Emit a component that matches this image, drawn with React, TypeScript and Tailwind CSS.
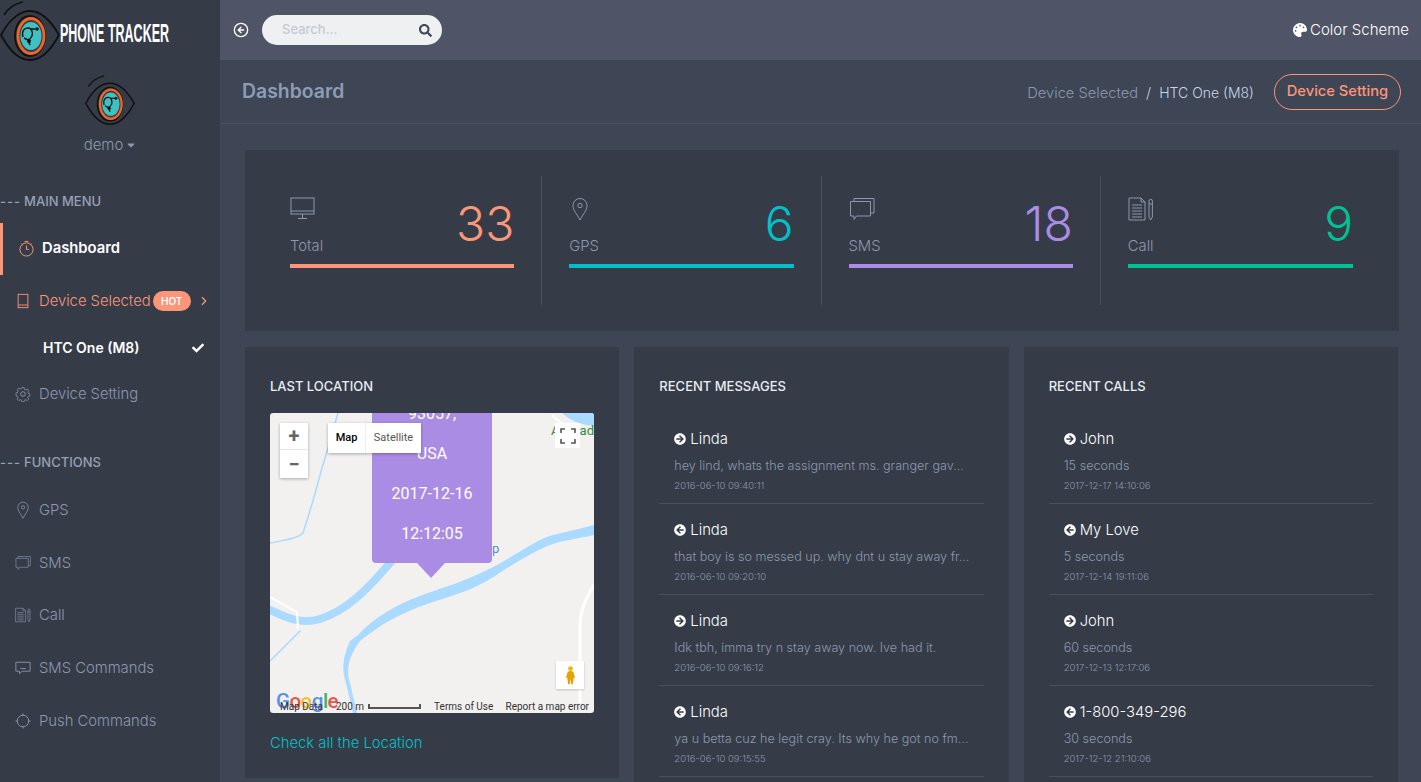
import React from "react";
import { FaArrowCircleRight, FaArrowCircleLeft, FaCheck, FaSearch, FaCaretDown, FaPalette } from "react-icons/fa";
import { CircleArrowLeft, ChevronRight } from "lucide-react";

type IP = { className?: string };
const line = { fill: "none", stroke: "currentColor", strokeWidth: 1 } as const;

const Eye = ({ className }: IP) => (
  <svg viewBox="0 0 60 60" className={className}>
    <path d="M1 34 C10 17 21 10 30 10 C41 10 51 20 59 34 C51 49 41 59 30 59 C19 59 9 49 1 34Z" fill="none" stroke="#111" strokeWidth="1.800" />
    <path d="M4 14 C8 7 14 3 23 1" fill="none" stroke="#111" strokeWidth="1.600" />
    <ellipse cx="30" cy="35" rx="15" ry="20" fill="none" stroke="#111" strokeWidth="1.800" />
    <ellipse cx="31" cy="35" rx="13" ry="17.500" fill="none" stroke="#f26522" strokeWidth="2.800" />
    <ellipse cx="31" cy="35" rx="10.500" ry="14" fill="#3fc1c4" />
    <path d="M23 36 C21 29 26 25 31 28 L35 28 M31 28 C34 33 32 37 28 39 M28 39 L30 44 M28 39 L24 37" fill="none" stroke="#111" strokeWidth="1.500" />
    <circle cx="37" cy="28" r="1.800" fill="#111" />
    <circle cx="29" cy="40" r="2" fill="#111" />
  </svg>
);

const Timer = ({ className }: IP) => (
  <svg viewBox="0 0 18 18" className={className} {...line}>
    <circle cx="9" cy="10" r="7" />
    <path d="M9 6v4h2.500M7 1.500h4M3.500 4 5 5.200M14.500 4 13 5.200" />
  </svg>
);
const Tablet = ({ className }: IP) => (
  <svg viewBox="0 0 18 18" className={className} {...line}>
    <rect x="3.500" y="1.500" width="11" height="15" />
    <path d="M3.500 13.500h11" />
  </svg>
);
const Gear = ({ className }: IP) => (
  <svg viewBox="0 0 18 18" className={className} {...line}>
    <circle cx="9" cy="9" r="2.600" />
    <path d="M7.600 1h2.800l.4 2.200 1.500.7 2-1.200 1.900 2-1.200 1.900.6 1.500 2 .5v2.800l-2 .5-.6 1.500 1.200 1.900-2 2-1.900-1.200-1.500.6-.4 2H7.600l-.5-2-1.500-.6-1.900 1.200-2-2 1.200-1.900-.6-1.500-2-.5V7.600l2-.5.6-1.500-1.200-1.900 2-2 1.900 1.200 1.500-.7Z" transform="translate(.9 .9) scale(.9)" />
  </svg>
);
const Pin = ({ className }: IP) => (
  <svg viewBox="0 0 18 24" className={className} {...line}>
    <path d="M9 23 C6 17 2 13.500 2 8.500 A7 7 0 0 1 16 8.500 C16 13.500 12 17 9 23Z" />
    <circle cx="9" cy="8.500" r="2.200" />
  </svg>
);
const Chats = ({ className }: IP) => (
  <svg viewBox="0 0 26 24" className={className} {...line}>
    <path d="M5 4V1.500h20V16h-3" />
    <path d="M1.500 4.500h20V19H7.500L5 22.500V19H1.500Z" />
  </svg>
);
const Doc = ({ className }: IP) => (
  <svg viewBox="0 0 26 24" className={className} {...line}>
    <path d="M1 1h12l4 4v18H1Z M13 1v4h4 M4 8h10M4 11h10M4 14h10M4 17h10M4 20h10" />
    <path d="M21 4 a1.700 1.700 0 0 1 3.400 0V20l-1.700 3-1.700-3Z M21 7h3.400" />
  </svg>
);
const Monitor = ({ className }: IP) => (
  <svg viewBox="0 0 26 24" className={className} {...line}>
    <rect x="1" y="1" width="23" height="16" />
    <path d="M1 14h23M12.500 17v4M8 21.500h9" />
  </svg>
);
const Comment = ({ className }: IP) => (
  <svg viewBox="0 0 18 16" className={className} {...line}>
    <path d="M1 1h16v10H8l-3 3v-3H1Z M6 8h6" />
  </svg>
);
const Target = ({ className }: IP) => (
  <svg viewBox="0 0 18 18" className={className} {...line}>
    <circle cx="9" cy="9" r="6.500" />
    <path d="M9 .5v3M9 14.500v3M.5 9h3M14.500 9h3" />
  </svg>
);

const Section = ({ label, className }: { label: string; className?: string }) => (
  <div className={`flex h-5 items-center gap-[3px] text-[13px] font-medium leading-5 text-[#97a1b5] ${className ?? ""}`}>
    <span className="tracking-[1px]">---</span>
    <span>{label}</span>
  </div>
);

const NavItem = ({ icon, label, h = "h-[52.75px]" }: { icon: React.ReactNode; label: string; h?: string }) => (
  <div className={`flex items-center gap-[8px] pl-[15px] text-[14.800px] font-light text-[#8d97ad] ${h}`}>
    <span className="flex w-4 justify-center">{icon}</span>
    <span>{label}</span>
  </div>
);

const Sidebar = () => (
  <aside className="flex w-[220px] shrink-0 flex-col bg-[#353c48]">
    <div className="flex h-[62px] items-center">
      <Eye className="h-[62px] w-[60px] shrink-0" />
      <span className="mt-[4px] block w-[109px] whitespace-nowrap text-[25px] font-bold leading-none text-white [font-family:'Liberation_Sans',sans-serif]">
        <span className="inline-block origin-left scale-x-[0.5]">PHONE TRACKER</span>
      </span>
    </div>
    <div className="mt-[12px] flex justify-center"><Eye className="h-[52px] w-[50px]" /></div>
    <div className="mt-[8px] flex items-center justify-center gap-[3px] text-[15px] font-light text-[#8d97ad]">
      demo <FaCaretDown className="h-3 w-[10px]" />
    </div>
    <Section label="MAIN MENU" className="mt-[34px]" />
    <div className="mt-[12px] flex h-[52px] items-center gap-[7px] border-l-[3px] border-[#fb9678] pl-[15px] text-[14.800px] font-semibold text-white">
      <Timer className="h-[17px] w-[17px] text-[#fb9678]" />
      <span>Dashboard</span>
    </div>
    <div className="flex h-[53px] items-center pl-[15px] text-[14.800px] font-light text-[#fb9678]">
      <Tablet className="mr-[8px] h-4 w-4" />
      <span>Device Selected</span>
      <span className="ml-[2px] flex h-5 w-[38px] items-center justify-center rounded-full bg-[#fb9678] text-[10px] font-semibold text-white">HOT</span>
      <ChevronRight className="ml-[6px] h-[14px] w-[14px]" />
    </div>
    <div className="flex h-[40px] items-center justify-between pl-[43px] pr-[15px] text-[14px] font-semibold text-white">
      <span>HTC One (M8)</span>
      <FaCheck className="h-3 w-[14px]" />
    </div>
    <NavItem h="h-[53px]" icon={<Gear className="h-4 w-4" />} label="Device Setting" />
    <Section label="FUNCTIONS" className="mt-[31px]" />
    <div className="mt-[12px] flex flex-col">
      <NavItem icon={<Pin className="h-[18px] w-4" />} label="GPS" />
      <NavItem icon={<Chats className="h-4 w-[17px]" />} label="SMS" />
      <NavItem icon={<Doc className="h-[18px] w-[18px]" />} label="Call" />
      <NavItem icon={<Comment className="h-[15px] w-[17px]" />} label="SMS Commands" />
      <NavItem icon={<Target className="h-4 w-4" />} label="Push Commands" />
    </div>
  </aside>
);

const stats = [
  { label: "Total", value: "33", text: "text-[#fb9678]", bar: "bg-[#fb9678]", icon: <Monitor className="h-6 w-[26px]" /> },
  { label: "GPS", value: "6", text: "text-[#01c0c8]", bar: "bg-[#01c0c8]", icon: <Pin className="ml-[2px] h-6 w-[18px]" /> },
  { label: "SMS", value: "18", text: "text-[#ab8ce4]", bar: "bg-[#ab8ce4]", icon: <Chats className="h-6 w-[26px]" /> },
  { label: "Call", value: "9", text: "text-[#00c292]", bar: "bg-[#00c292]", icon: <Doc className="h-6 w-[26px]" /> },
];

const Stats = () => (
  <section className="mb-4 grid h-[181px] grid-cols-4 bg-[#353c48] py-[26px] pl-[18px] pr-[19px]">
    {stats.map((s, i) => (
      <div key={s.label} className={`flex flex-col px-[27px] pt-[21px] ${i < 3 ? "border-r border-[#4a505d]" : ""}`}>
        <div className="flex h-[67px] items-start justify-between">
          <div className="flex flex-col text-[#8d97ad]">
            {s.icon}
            <span className="mt-[13px] text-[14.800px] font-light leading-6">{s.label}</span>
          </div>
          <span className={`-mt-[9px] text-[48px] font-light leading-[72px] ${s.text}`}>{s.value}</span>
        </div>
        <div className={`h-1 w-full ${s.bar}`} />
      </div>
    ))}
  </section>
);

const MapView = () => (
  <div className="relative h-[300px] w-[324px] overflow-hidden rounded-[3px] bg-[#f2f1ef] [font-family:Roboto,sans-serif]">
    <svg viewBox="0 0 324 300" className="block h-full w-full">
      <path d="M292 0 C300 8 312 12 324 13 V0Z" fill="#aadaff" />
      <path d="M282 2 C286 6 290 10 296 13" fill="none" stroke="#fff" strokeWidth="2" />
      <g fill="none" stroke="#aadaff" strokeLinecap="round">
        <path d="M68 0 C62 20 58 36 52 55 C44 85 38 105 33 120 C28 126 10 128 0 130" strokeWidth="1.500" />
        <path d="M0 197 C15 204 30 212 50 206 C75 198 95 180 125 144" strokeWidth="8" />
        <path d="M30 218 L0 248" strokeWidth="1.500" />
      </g>
      <path d="M324 112 C300 119 283 120 268 128 C250 138 232 150 215 158 C195 168 175 174 155 181 C125 192 105 204 88 222 L80 228 C72 246 72 258 76 270 L83 300 H87 L80 270 C76 258 78 244 90 228 C110 212 130 200 160 190 C185 182 205 176 225 163 C240 153 258 142 275 134 C290 127 308 126 324 122Z" fill="#aadaff" />
      <g fill="none" stroke="#ffffff" strokeWidth="3">
        <path d="M324 172 C316 185 311 195 310 210 L310 290" />
        <path d="M0 184 L27 199 L28 216" strokeWidth="2" />
      </g>
    </svg>
    <span className="absolute left-[281px] top-[10px] text-[13px] leading-4 text-[#2e8b3d]">A</span>
    <span className="absolute right-0 top-[10px] text-[13px] leading-4 text-[#2e8b3d]">ad</span>
    <span className="absolute left-[222px] top-[128px] text-[13px] leading-4 text-[#5b8fc4]">p</span>

    <div className="absolute left-[102px] top-[-19px] flex h-[169px] w-[120px] flex-col items-center rounded-b-[4px] bg-[#ab8ce4] text-[16px] leading-[40px] text-white">
      <span>93057,</span>
      <span>USA</span>
      <span>2017-12-16</span>
      <span>12:12:05</span>
    </div>
    <div className="absolute left-[147px] top-[150px] h-0 w-0 border-x-[14px] border-t-[15px] border-x-transparent border-t-[#ab8ce4]" />

    <div className="absolute left-[10px] top-[10px] flex h-[55px] w-[28px] flex-col items-center bg-white shadow-[0_1px_3px_rgba(0,0,0,0.3)]">
      <span className="flex h-[27px] w-full items-center justify-center border-b border-[#e6e6e6] text-[20px] font-bold text-[#666]">+</span>
      <span className="flex h-[28px] w-full items-center justify-center text-[20px] font-bold text-[#666]">−</span>
    </div>
    <div className="absolute left-[58px] top-[10px] flex h-[30px] bg-white text-[11px] shadow-[0_1px_3px_rgba(0,0,0,0.3)]">
      <span className="flex w-[37px] items-center justify-center font-medium text-black">Map</span>
      <span className="flex w-[56px] items-center justify-center border-l border-[#eee] text-[#565656]">Satellite</span>
    </div>
    <div className="absolute left-[285px] top-[10px] flex h-[25px] w-[25px] items-center justify-center bg-white">
      <svg viewBox="0 0 16 16" className="h-4 w-4" fill="none" stroke="#555" strokeWidth="1.600">
        <path d="M1 5V1h4M11 1h4v4M15 11v4h-4M5 15H1v-4" />
      </svg>
    </div>
    <div className="absolute left-[286px] top-[248px] flex h-7 w-7 items-center justify-center bg-white shadow-[0_1px_2px_rgba(0,0,0,0.2)]">
      <svg viewBox="0 0 12 20" className="h-5 w-[11px]">
        <circle cx="6" cy="3" r="2.600" fill="#f5b400" />
        <path d="M3 6.500 Q6 5 9 6.500 L11 13 H9.500 L8.500 20 H6.800 L6 14 L5.200 20 H3.500 L2.500 13 H1Z" fill="#e8a200" />
      </svg>
    </div>
    <div className="absolute bottom-0 left-[6px] text-[20.500px] font-medium leading-[24px] tracking-[-0.5px] opacity-90">
      <span className="text-[#4285f4]">G</span><span className="text-[#ea4335]">o</span><span className="text-[#fbbc05]">o</span><span className="text-[#4285f4]">g</span><span className="text-[#34a853]">l</span><span className="text-[#ea4335]">e</span>
    </div>
    <div className="absolute bottom-0 left-[10px] right-[5px] flex h-[14px] items-center text-[10px] text-[#333]">
      <span>Map Data</span>
      <span className="ml-[13px]">200 m</span>
      <span className="ml-[4px] h-[5px] w-[53px] border-x-2 border-b-2 border-[#555]" />
      <span className="ml-[13px]">Terms of Use</span>
      <span className="ml-auto">Report a map error</span>
    </div>
  </div>
);

const Card = ({ title, children, className }: { title: string; children: React.ReactNode; className?: string }) => (
  <div className={`bg-[#353c48] px-[25px] pt-[29px] ${className ?? ""}`}>
    <h3 className="mb-[16px] h-[21px] text-[13px] font-medium uppercase leading-[20px] text-[#e8ecf3]">{title}</h3>
    {children}
  </div>
);

const Row = ({ dir, name, text, date }: { dir: "in" | "out"; name: string; text: string; date: string }) => (
  <div className="flex h-[91px] flex-col border-b border-[#4a505d] pl-[15px] pt-[14px]">
    <div className="flex h-[24px] items-center gap-[4px] text-[14.800px] font-light text-white">
      {dir === "out" ? <FaArrowCircleRight className="h-3 w-3" /> : <FaArrowCircleLeft className="h-3 w-3" />}
      <span>{name}</span>
    </div>
    <div className="mt-[5px] h-[20px] truncate text-[12.600px] font-light leading-5 text-[#8d97ad]">{text}</div>
    <div className="mt-[2px] text-[9.500px] font-light leading-4 text-[#8d97ad]">{date}</div>
  </div>
);

const messages = [
  { dir: "out", name: "Linda", text: "hey lind, whats the assignment ms. granger gav...", date: "2016-06-10 09:40:11" },
  { dir: "in", name: "Linda", text: "that boy is so messed up. why dnt u stay away fr...", date: "2016-06-10 09:20:10" },
  { dir: "out", name: "Linda", text: "Idk tbh, imma try n stay away now. Ive had it.", date: "2016-06-10 09:16:12" },
  { dir: "in", name: "Linda", text: "ya u betta cuz he legit cray. Its why he got no fm...", date: "2016-06-10 09:15:55" },
] as const;
const calls = [
  { dir: "out", name: "John", text: "15 seconds", date: "2017-12-17 14:10:06" },
  { dir: "in", name: "My Love", text: "5 seconds", date: "2017-12-14 19:11:06" },
  { dir: "out", name: "John", text: "60 seconds", date: "2017-12-13 12:17:06" },
  { dir: "in", name: "1-800-349-296", text: "30 seconds", date: "2017-12-12 21:10:06" },
] as const;

export default function App() {
  return (
    <div className="flex h-[782px] w-[1421px] overflow-hidden bg-[#3e4555] [font-family:Inter,sans-serif]">
      <Sidebar />
      <main className="flex min-w-0 flex-1 flex-col">
        <header className="flex h-[60px] shrink-0 items-center bg-[#4f5467] pl-[13px] pr-[12px]">
          <CircleArrowLeft className="h-4 w-4 text-white" />
          <div className="ml-[13px] flex h-[30px] w-[180px] items-center justify-between rounded-full bg-[#eef0f1] pl-5 pr-[10px] text-[13px] font-medium text-[#c5cad3]">
            <span>Search...</span>
            <FaSearch className="h-[13px] w-[13px] text-[#3e4555]" />
          </div>
          <div className="ml-auto flex items-center gap-[3px] text-[15px] font-light text-white">
            <FaPalette className="h-[14px] w-[14px]" />
            <span>Color Scheme</span>
          </div>
        </header>
        <div className="flex h-[64px] shrink-0 items-center border-b border-[#4a505d] pl-[22px] pr-[20px]">
          <h1 className="text-[19.400px] font-semibold text-[#8d9db5]">Dashboard</h1>
          <div className="ml-auto mt-[3px] flex items-center text-[14.700px] font-light">
            <span className="text-[#8d97ad]">Device Selected</span>
            <span className="mx-[8px] text-[#c7cede]">/</span>
            <span className="text-[14px] text-[#c7d7ea]">HTC One (M8)</span>
          </div>
          <button className="ml-[20px] flex h-[36px] w-[127px] items-center justify-center rounded-full border border-[#fb9678] text-[14.700px] font-medium text-[#fb9678]">
            Device Setting
          </button>
        </div>
        <div className="flex min-h-0 flex-1 flex-col overflow-hidden pl-[25px] pr-[22px] pt-[26px]">
          <Stats />
          <div className="mr-[1px] grid grid-cols-3 gap-x-[15px]">
            <Card title="Last Location" className="h-[431px]">
              <MapView />
              <div className="mt-[20px] text-[14.800px] font-light leading-5 text-[#01c0c8]">Check all the Location</div>
            </Card>
            <Card title="Recent Messages" className="h-[435px]">
              {messages.map((m, i) => <Row key={i} {...m} />)}
            </Card>
            <Card title="Recent Calls" className="h-[435px]">
              {calls.map((m, i) => <Row key={i} {...m} />)}
            </Card>
          </div>
        </div>
      </main>
    </div>
  );
}
